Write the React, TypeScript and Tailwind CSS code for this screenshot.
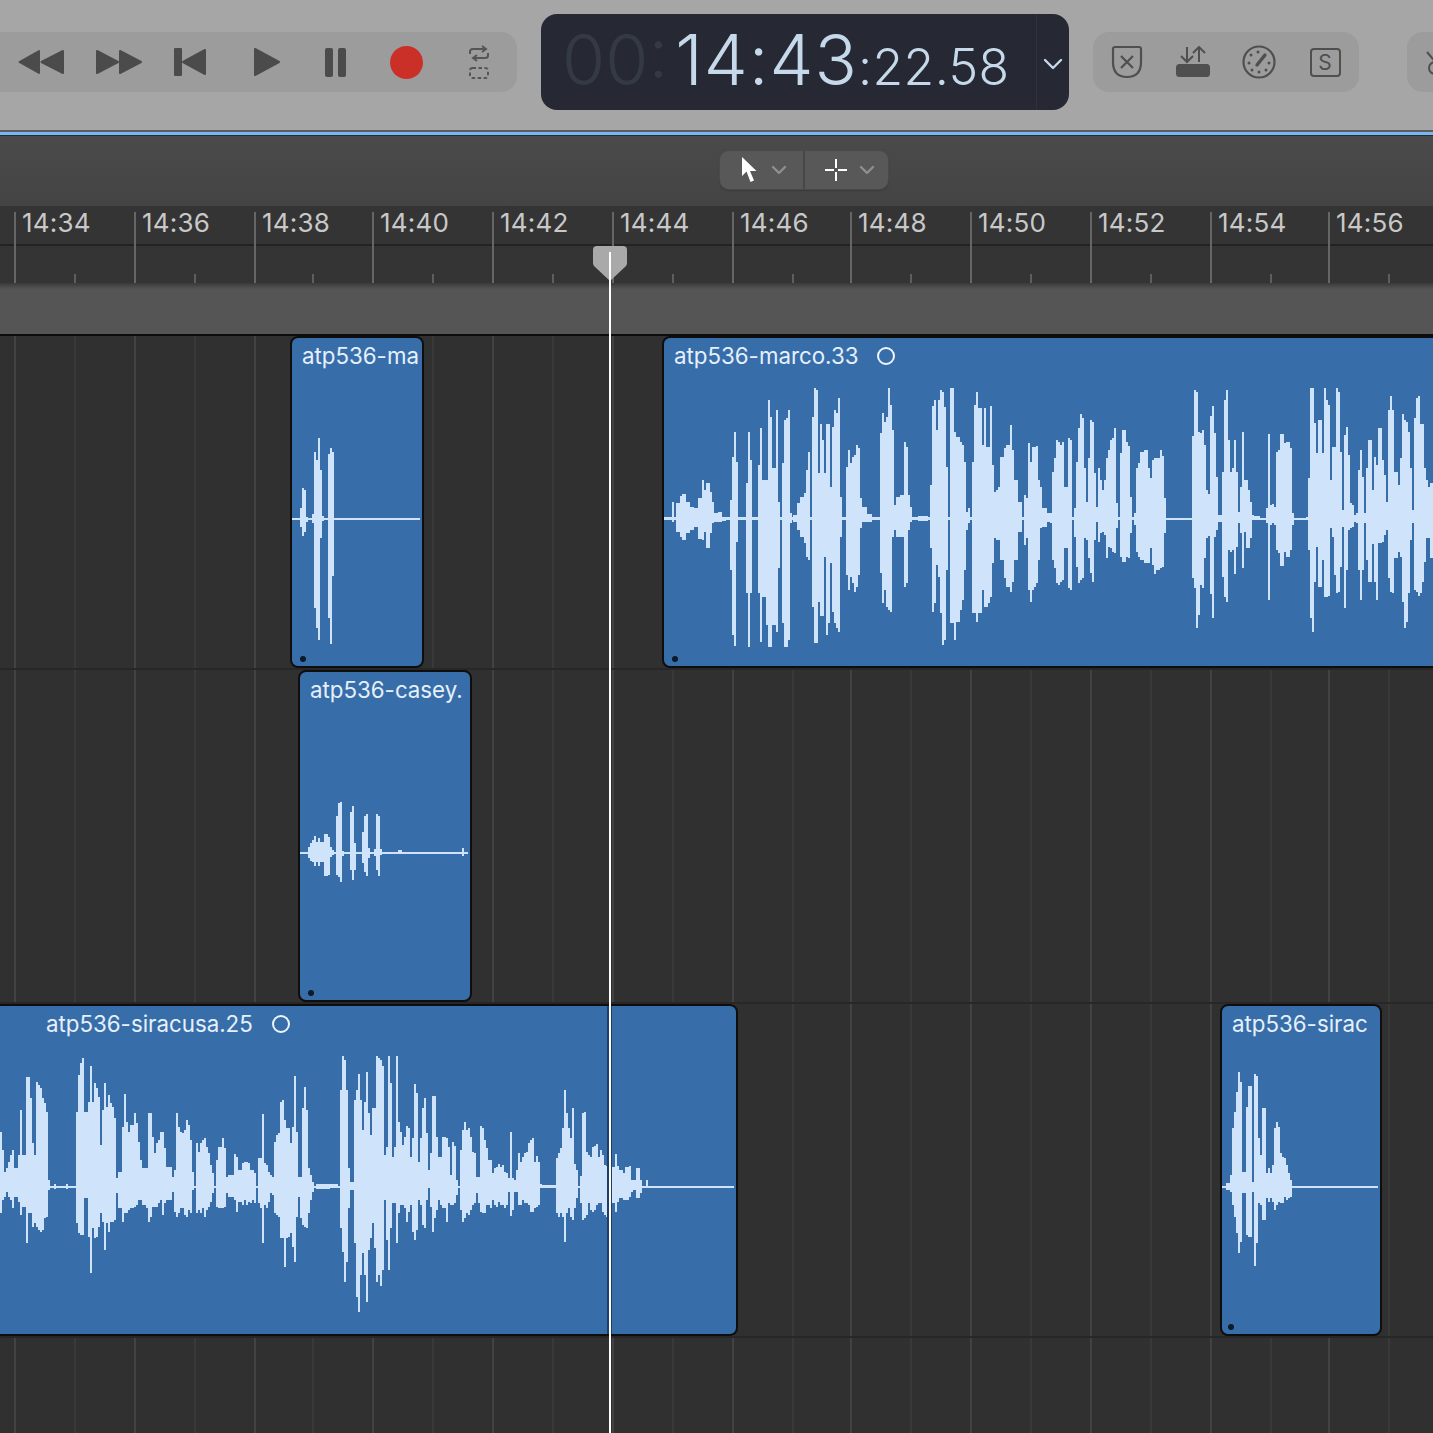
type Bar = [number, number, number, number];

const ui = { fontFamily: "Inter, 'Liberation Sans', sans-serif" };

// bars are [x0, x1, top, bottom] read off a 3x crop, so ox/oy is that crop's origin
const toPath = (bars: Bar[], ox: number, oy: number) =>
  bars
    .map(
      ([a, b, t, u]) =>
        `M${ox + a / 3} ${oy + t / 3}H${ox + b / 3}V${oy + u / 3}H${ox + a / 3}Z`
    )
    .join("");

const marcoA: Bar[] = [
  [12,1170,562,569],[36,42,516,576],[48,60,520,605],[60,66,498,620],[66,78,492,630],[78,90,515,610],[90,102,532,600],[102,114,534,590],[114,126,505,628],[126,132,450,630],[132,138,480,605],[138,150,458,654],[150,156,485,610],[156,162,515,580],[162,174,550,575],[174,186,546,575],[186,198,560,572],
  [210,216,510,720],[216,222,380,915],[222,228,306,948],[228,234,395,635],[258,264,460,790],[264,270,306,952],[270,276,390,790],
  [294,300,405,790],[300,306,294,935],[306,318,450,800],[318,324,450,885],[324,330,210,952],[330,336,262,952],[336,348,415,885],[348,354,240,905],[354,360,515,715],[366,372,400,880],[372,378,270,952],[378,384,265,952],[384,390,240,930],[390,396,550,580],
  [400,412,555,575],[412,420,520,600],[420,432,500,620],[432,438,490,640],[438,444,420,680],[444,450,365,690],[456,462,260,830],[462,468,175,940],[468,474,180,940],[474,480,430,815],[480,486,282,858],[486,492,330,858],[492,498,430,680],[498,504,282,915],[504,510,282,880],[510,516,470,700],[516,522,290,845],[522,528,240,880],[528,534,250,895],[534,540,205,905],[540,546,500,620],
  [558,564,410,735],[564,570,360,780],[570,576,400,740],[576,582,380,760],[582,588,375,785],[588,594,345,770],[594,600,355,735],[600,606,505,595],[606,620,530,575],[620,636,552,575],
  [660,666,310,730],[666,672,250,820],[672,678,275,780],[678,684,262,830],[684,690,175,840],[690,696,225,845],[696,702,300,620],[702,708,525,600],[708,720,500,620],[720,732,495,620],[732,738,335,770],[738,744,350,760],[744,750,495,600],[750,756,530,575],[774,804,558,572],
  [810,816,465,655],[816,822,228,845],[822,828,210,820],[828,834,300,705],[834,840,210,740],[840,846,180,850],[846,852,185,945],[852,858,230,930],[858,864,410,720],[870,876,175,880],[876,882,175,880],[882,888,305,930],[888,900,320,875],[900,906,335,840],[906,912,345,810],[912,918,395,720],[918,924,545,600],[924,930,535,580],
  [936,942,395,850],[942,948,225,850],[948,954,185,875],[954,966,235,850],[966,972,345,780],[972,978,235,830],[978,984,350,830],[984,990,350,820],[990,996,228,800],[996,1002,405,700],[1002,1008,485,625],[1008,1014,480,630],[1014,1020,470,630],[1020,1032,380,690],[1032,1038,355,745],[1038,1050,345,770],[1050,1056,285,785],[1056,1062,360,755],[1062,1074,450,690],[1074,1086,515,605],[1092,1098,495,645],[1098,1104,505,625],[1104,1110,338,780],[1110,1116,395,815],[1116,1122,350,780],[1122,1128,350,770],[1128,1134,348,760],[1134,1140,450,690],[1140,1146,470,595],[1146,1160,535,590],[1160,1170,550,575],
];

const marcoB: Bar[] = [
  [0,1149,443,449],[0,6,430,460],[6,12,305,570],[12,18,265,595],[18,24,210,640],[24,30,215,645],[30,36,225,635],[36,42,215,630],[42,54,350,535],[54,60,205,655],[60,66,210,660],[66,72,440,450],[72,78,415,500],[78,84,275,590],[84,90,175,640],[90,96,132,630],[96,102,145,625],[102,108,295,505],[108,114,395,510],[114,120,265,565],[120,126,150,610],[126,132,155,635],[132,138,310,510],[138,144,410,455],[144,150,295,515],[150,156,330,490],[156,162,360,485],[162,168,330,495],[168,174,265,565],[174,180,240,530],[180,186,210,535],[186,192,205,545],[192,198,175,550],[198,204,400,475],[204,210,440,450],[210,216,250,560],[216,228,180,575],[228,234,215,560],[234,240,228,565],[240,246,380,490],[246,252,440,450],[252,258,430,465],[258,264,295,545],[264,270,280,560],[270,282,245,570],[282,294,240,578],[294,300,295,580],[300,306,325,535],[306,312,270,585],[312,318,265,612],[318,330,265,600],[330,336,240,595],[336,342,258,590],[342,348,385,490],
  [426,432,198,625],[432,438,60,655],[438,444,65,775],[444,450,185,735],[450,456,190,645],[456,462,180,655],[462,468,225,565],[468,474,360,505],[474,480,372,498],[480,486,138,672],[486,492,108,745],[492,498,190,500],[498,504,320,480],[504,516,435,455],[516,522,305,620],[522,528,90,680],[528,534,60,695],[534,540,210,540],[540,546,305,545],[546,552,295,540],[552,558,210,612],[558,564,305,530],[564,570,425,460],[570,576,350,490],[576,582,185,595],[582,588,330,485],[588,594,330,535],[594,600,360,535],[600,606,395,505],[606,612,435,450],[612,630,438,447],
  [648,654,415,460],[654,660,192,690],[660,666,405,465],[666,672,402,460],[672,678,410,465],[678,684,245,540],[684,690,240,548],[690,702,192,588],[702,708,218,545],[708,720,215,562],[720,726,235,540],[726,732,430,465],
  [768,774,440,450],[774,780,325,540],[780,786,55,745],[786,792,55,785],[792,798,160,635],[798,804,250,530],[804,816,150,650],[816,822,250,570],[822,828,55,680],[828,834,90,680],[834,840,105,678],[840,846,330,475],[846,852,230,500],[852,858,230,615],[858,864,55,670],[864,870,65,665],[870,876,245,590],[876,882,420,470],[882,888,195,715],[888,894,170,600],[894,900,255,480],[900,906,400,475],[906,912,405,470],[912,918,435,455],[918,924,430,460],[924,930,300,600],[930,936,240,690],[936,942,320,600],[942,948,430,460],[948,954,295,570],[954,966,210,635],[966,972,360,522],[972,978,260,635],[978,984,285,690],[984,996,175,520],[996,1002,270,515],[1002,1008,315,495],[1008,1014,395,480],[1014,1020,120,625],[1020,1026,78,665],[1026,1032,120,670],[1032,1044,305,565],[1044,1050,345,545],[1050,1056,265,560],[1056,1062,132,695],[1062,1068,150,775],[1068,1074,155,755],[1074,1080,185,670],[1080,1086,295,510],[1086,1092,420,460],[1092,1098,145,660],[1098,1104,85,665],[1104,1110,78,678],[1110,1116,162,670],[1116,1122,162,635],[1122,1128,295,575],[1128,1134,330,505],[1134,1140,350,505],[1140,1149,340,565],
];

const siracusaA: Bar[] = [
  [0,990,557,564],[0,6,395,640],[6,12,450,600],[12,18,515,590],[18,24,505,575],[24,30,485,590],[30,36,465,600],[36,42,450,625],[42,54,505,590],[54,60,465,605],[60,66,330,645],[66,78,465,620],[78,84,230,730],[84,90,230,640],[90,96,295,640],[96,102,430,680],[102,108,465,670],[108,114,245,680],[114,120,255,690],[120,126,265,695],[126,132,295,690],[132,138,310,655],[138,144,335,650],[144,150,540,570],[162,168,552,566],[198,204,552,566],
  [228,234,335,670],[234,240,225,700],[240,246,190,705],[246,252,175,705],[252,264,335,595],[264,270,305,710],[270,276,198,820],[276,282,305,685],[282,288,250,715],[288,294,265,710],[294,300,290,680],[300,306,435,640],[306,312,330,665],[312,318,248,750],[318,324,320,670],[324,330,285,695],[330,336,310,665],[336,342,320,665],[342,348,355,660],[348,354,535,580],[354,366,515,625],[366,372,380,665],[372,378,282,640],[378,384,365,640],[384,390,395,630],[390,402,375,625],[402,408,338,620],[408,414,368,615],[414,420,425,600],[420,426,480,600],[426,438,505,615],[438,444,505,625],[444,450,338,665],[450,456,340,650],[456,462,410,620],[462,468,460,620],[468,474,430,620],[474,480,420,610],[480,486,395,600],[486,492,395,645],[492,498,445,610],[498,516,500,600],[516,522,530,575],[522,528,510,635],[528,534,338,650],[534,540,380,640],[540,546,395,625],[546,552,400,625],[552,558,390,645],[558,564,360,650],[564,570,375,630],[570,576,420,640],[576,582,515,570],[588,594,430,640],[594,600,455,630],[600,606,430,640],[606,612,420,625],[612,618,415,650],[618,624,440,630],[624,630,460,620],[630,636,495,605],[636,642,520,580],[648,654,480,620],[654,666,440,625],[666,672,415,625],[672,678,445,620],[678,684,530,580],[684,702,525,590],[702,708,462,600],[708,714,470,635],[714,726,510,605],[726,732,490,615],[732,738,485,600],[738,744,485,615],[744,750,490,605],[750,756,510,610],[756,762,510,600],[762,768,520,610],[774,780,475,610],[780,786,475,625],[786,792,342,730],[792,798,490,615],[798,804,495,625],[804,810,515,605],[810,816,525,580],[816,822,530,585],[822,828,425,640],[828,834,405,645],[834,840,400,650],[840,846,305,715],[846,852,300,715],[852,858,360,800],[858,864,385,715],[864,870,385,710],[870,876,430,700],[876,882,380,740],[882,888,228,785],[888,894,395,650],[894,900,530,590],[900,906,530,655],[906,912,325,675],[912,918,260,680],[918,924,330,685],[924,930,505,640],[930,936,525,600],[936,942,545,575],[948,990,552,566],
];

const siracusaB: Bar[] = [
  [0,24,432,443],[24,1212,437,443],[30,36,150,565],[36,42,48,635],[42,48,60,725],[48,54,150,665],[54,60,385,505],[60,72,425,450],[72,78,180,610],[78,84,150,772],[84,90,102,815],[90,96,180,705],[96,102,270,640],[102,108,185,705],[108,114,97,785],[114,120,220,630],[120,126,285,595],[126,132,205,550],[132,138,205,625],[138,144,48,725],[144,150,55,705],[150,156,60,737],[156,162,78,690],[162,168,345,480],[168,174,320,600],[174,180,48,690],[180,186,130,565],[186,192,350,490],[192,198,320,490],[198,204,48,610],[204,210,245,520],[210,216,275,495],[216,222,315,495],[222,228,290,505],[228,234,258,545],[234,240,265,515],[240,246,350,495],[246,252,295,575],[252,258,132,600],[258,264,160,570],[264,270,365,480],[270,276,295,495],[276,282,205,555],[282,288,175,565],[288,294,280,480],[294,300,390,445],[300,306,340,500],[306,312,168,575],[312,318,168,535],[318,324,290,510],[324,330,350,480],[330,336,350,495],[336,348,290,505],[348,354,295,545],[354,360,320,490],[360,366,405,495],[366,372,306,495],[372,378,318,490],[378,384,420,465],[390,396,330,510],[396,402,270,545],[402,408,245,535],[408,414,270,520],[414,420,265,525],[420,426,290,510],[426,432,335,495],[432,438,340,490],[438,444,410,460],[444,450,410,490],[450,456,258,515],[456,462,265,520],[462,468,300,520],[468,474,325,495],[474,480,360,495],[480,486,360,505],[486,492,400,480],[492,498,385,495],[498,504,380,500],[504,510,372,485],[510,516,380,495],[516,522,375,495],[522,528,395,505],[528,534,400,495],[534,540,415,455],[540,546,276,528],[546,552,415,510],[552,558,420,455],[558,564,390,455],[564,570,340,495],[570,576,365,495],[576,582,350,480],[582,588,340,490],[588,594,335,490],[594,600,310,495],[600,606,300,515],[606,612,295,515],[612,618,365,505],[618,624,348,500],[624,630,365,495],[630,636,432,445],[636,678,436,444],
  [678,684,355,520],[684,690,340,532],[690,696,325,520],[696,702,265,530],[702,708,150,605],[708,714,220,520],[714,720,265,505],[720,726,295,530],[726,732,205,540],[732,738,372,505],[738,744,390,475],[750,756,408,490],[756,762,220,540],[762,768,215,535],[768,774,335,525],[774,780,345,490],[780,786,350,510],[786,792,320,515],[792,798,318,510],[798,804,312,495],[804,810,350,490],[810,816,330,490],[816,822,345,515],[822,828,375,525],[828,834,378,530],[834,854,380,490],[854,860,342,515],[860,866,378,485],[866,878,390,475],[878,884,398,480],[884,896,380,480],[896,902,378,470],[902,908,420,455],[908,918,420,450],[918,930,384,473],[930,936,420,460],[948,954,420,438],
];

const sirac: Bar[] = [
  [66,534,557,564],[78,90,550,570],[90,96,525,575],[96,102,385,615],[102,108,335,650],[108,114,275,700],[114,120,215,760],[120,126,245,725],[126,138,515,580],[138,144,320,705],[144,156,258,710],[156,162,545,575],[162,168,222,798],[168,174,228,730],[174,180,415,610],[180,186,465,615],[186,198,325,660],[198,204,520,595],[204,210,505,605],[210,216,518,595],[216,222,495,605],[222,228,385,630],[228,234,365,615],[234,240,380,605],[240,246,460,610],[246,252,470,610],[252,258,475,590],[258,264,495,600],[264,270,520,595],[270,276,540,590],
];

const ma: Bar[] = [
  [36,420,563,569],[60,66,535,590],[66,72,475,618],[72,78,480,605],[78,84,560,575],[96,102,552,580],[102,108,365,835],[108,114,390,895],[114,120,324,930],[120,126,420,625],[126,132,558,572],[144,150,372,865],[150,156,354,942],[156,162,366,738],
];

const casey: Bar[] = [
  [30,534,561,567],[54,60,545,580],[60,66,535,588],[66,72,525,590],[72,78,512,602],[78,84,530,590],[84,90,520,602],[90,102,530,590],[102,114,507,632],[114,120,515,630],[120,126,545,575],[126,132,555,570],[138,144,452,630],[144,150,415,635],[150,156,410,650],[156,162,558,572],[180,186,440,615],[186,192,422,645],[192,198,535,615],[216,222,500,595],[222,228,452,620],[228,234,448,632],[234,240,548,578],[252,258,552,572],[258,264,447,615],[264,270,452,632],[270,276,552,570],[324,336,556,567],[516,522,548,572],
];

const majors = [
  { x: 15, label: "14:34" },
  { x: 135, label: "14:36" },
  { x: 255, label: "14:38" },
  { x: 373, label: "14:40" },
  { x: 493, label: "14:42" },
  { x: 613, label: "14:44" },
  { x: 733, label: "14:46" },
  { x: 851, label: "14:48" },
  { x: 971, label: "14:50" },
  { x: 1091, label: "14:52" },
  { x: 1211, label: "14:54" },
  { x: 1329, label: "14:56" },
];
const minors = [75, 195, 313, 433, 553, 673, 793, 911, 1031, 1151, 1271, 1389];

function Clip({
  box,
  viewBox,
  w,
  h,
  title,
  titlePad = "pl-[10px]",
  dotLeft = "left-[8px]",
  circle,
  dot = true,
  d,
  children,
}: {
  box: string;
  viewBox: string;
  w: number;
  h: number;
  title: string;
  titlePad?: string;
  dotLeft?: string;
  circle?: boolean;
  dot?: boolean;
  d: string;
  children?: React.ReactNode;
}) {
  return (
    <div
      className={`absolute top-0 h-[332px] border-2 border-[#0e0e0e] rounded-[8px] bg-[#376eaa] overflow-hidden ${box}`}
    >
      <svg
        className="absolute left-0 top-0"
        width={w}
        height={h}
        viewBox={viewBox}
        shapeRendering="crispEdges"
      >
        <path d={d} fill="#cfe4fb" />
      </svg>
      <div
        className={`relative flex items-center h-[36px] text-[22.3px] leading-none text-[#e6f0fb] whitespace-nowrap ${titlePad}`}
        style={ui}
      >
        <span>{title}</span>
        {circle && (
          <span className="ml-[19px] w-[18px] h-[18px] rounded-full border-2 border-[#eef5fc]" />
        )}
      </div>
      {dot && (
        <span className={`absolute bottom-[4px] w-[6px] h-[6px] rounded-full bg-[#0c1a2a] ${dotLeft}`} />
      )}
      {children}
    </div>
  );
}

const Dark = "#4b4b4b";

function Toolbar() {
  return (
    <div className="h-[130px] shrink-0 flex items-start pt-[14px] bg-[#a6a6a6]">
      <div className="mt-[18px] w-[517px] h-[60px] shrink-0 flex items-center rounded-r-[16px] bg-[#9c9c9c]">
        <div className="w-[82px] flex justify-center">
          <svg width="46" height="26" viewBox="0 0 46 26" fill={Dark} stroke={Dark} strokeWidth="2" strokeLinejoin="round">
            <path d="M1.5 13 21 2v22zM23.5 13 45 2v22z" />
          </svg>
        </div>
        <div className="w-[74px] flex justify-center">
          <svg width="46" height="26" viewBox="0 0 46 26" fill={Dark} stroke={Dark} strokeWidth="2" strokeLinejoin="round">
            <path d="M1 2l21 11L1 24zM24 2l21 11-21 11z" />
          </svg>
        </div>
        <div className="w-[68px] flex justify-center">
          <svg width="34" height="30" viewBox="0 0 34 30" fill={Dark} stroke={Dark} strokeWidth="2" strokeLinejoin="round">
            <path d="M2 2h6v26H2zM10 15 32 3v24z" />
          </svg>
        </div>
        <div className="w-[86px] flex justify-center">
          <svg width="28" height="30" viewBox="0 0 28 30" fill={Dark} stroke={Dark} strokeWidth="2" strokeLinejoin="round">
            <path d="M2 2l24 13L2 28z" />
          </svg>
        </div>
        <div className="w-[50px] flex justify-center gap-[5px]">
          <span className="w-[8px] h-[29px] rounded-[2px] bg-[#4b4b4b]" />
          <span className="w-[8px] h-[29px] rounded-[2px] bg-[#4b4b4b]" />
        </div>
        <div className="w-[92px] flex justify-center">
          <span className="w-[33px] h-[33px] rounded-full bg-[#cb3028]" />
        </div>
        <div className="w-[54px] flex justify-center">
          <svg width="22" height="34" viewBox="0 0 22 34" fill="none" stroke="#555" strokeWidth="2">
            <path d="M2 9V6.5Q2 4 5 4h12M14 1l4 3-4 3" />
            <path d="M20 8v2.5Q20 13 17 13H6M9 10l-4 3 4 3" />
            <rect x="2" y="23" width="18" height="10" rx="2.5" strokeDasharray="3.5 2.5" />
          </svg>
        </div>
      </div>

      <div className="ml-[24px] w-[528px] h-[96px] shrink-0 relative flex items-baseline rounded-[16px] bg-[#262833] pl-[21px] pt-[6px] text-[#c6d9ea] font-light" style={ui}>
        <span className="text-[70px] leading-[80px] text-[#343a45]">00:</span>
        <span className="ml-[7px] text-[70px] leading-[80px] tracking-[1px]">14:43</span>
        <span className="text-[50px] leading-[80px] tracking-[0.4px]">:22.58</span>
        <span className="absolute left-[495px] top-0 h-full w-px bg-[#2f313c]" />
        <svg className="absolute left-[502px] top-[43px]" width="20" height="14" viewBox="0 0 20 14" fill="none" stroke="#c6d9ea" strokeWidth="2.4" strokeLinecap="round" strokeLinejoin="round">
          <path d="M2 3l8 8 8-8" />
        </svg>
      </div>

      <div className="ml-[24px] mt-[18px] w-[266px] h-[60px] shrink-0 flex items-center pl-px rounded-[16px] bg-[#9c9c9c]">
        <div className="w-[66px] flex justify-center">
          <svg width="32" height="34" viewBox="0 0 32 34" fill="none" stroke="#4f4f4f" strokeWidth="2.2">
            <path d="M4 2h24q2 0 2 2v13q0 15-14 15T2 17V4q0-2 2-2z" />
            <path d="M10 11l12 12M22 11 10 23" />
          </svg>
        </div>
        <div className="w-[66px] flex justify-center">
          <svg width="34" height="32" viewBox="0 0 34 32" fill="none" stroke="#4f4f4f" strokeWidth="2">
            <path d="M11 1v15M5 10l6 6 6-6M23 16V1M17 7l6-6 6 6" />
            <rect x="1" y="19" width="32" height="11" rx="2.5" fill="#4f4f4f" />
          </svg>
        </div>
        <div className="w-[66px] flex justify-center">
          <svg width="34" height="34" viewBox="0 0 34 34" fill="none" stroke="#4f4f4f" strokeWidth="2.2">
            <circle cx="17" cy="17" r="15.5" />
            <path d="M15 20l8-10" strokeWidth="3.4" strokeLinecap="round" />
            <g fill="#4f4f4f" stroke="none">
              <circle cx="16" cy="7" r="1.5" />
              <circle cx="9" cy="10" r="1.5" />
              <circle cx="7" cy="18" r="1.5" />
              <circle cx="10" cy="25" r="1.5" />
              <circle cx="17" cy="27" r="1.5" />
              <circle cx="24" cy="25" r="1.5" />
              <circle cx="27" cy="18" r="1.5" />
            </g>
          </svg>
        </div>
        <div className="w-[66px] flex justify-center">
          <span className="w-[31px] h-[29px] flex items-center justify-center rounded-[4px] border-[2.5px] border-[#4f4f4f] text-[21px] leading-none text-[#4f4f4f]" style={ui}>
            S
          </span>
        </div>
      </div>

      <div className="ml-[48px] mt-[18px] w-[100px] h-[60px] shrink-0 rounded-[16px] bg-[#9c9c9c] pl-[19px] pt-[19px]">
        <svg width="14" height="26" viewBox="0 0 14 26" fill="none" stroke="#4f4f4f" strokeWidth="2">
          <path d="M1 1l11 13" />
          <circle cx="9" cy="17" r="6" />
        </svg>
      </div>
    </div>
  );
}

function ControlBar() {
  return (
    <div className="h-[70px] shrink-0 flex justify-center bg-linear-to-b from-[#4a4a4a] to-[#444444] pt-[14px]">
      <div className="ml-[175px] w-[170px] h-[40px] flex rounded-[10px] bg-[#585858] border border-[#4a4a4a] shadow-[0_1px_1px_#3a3a3a]">
        <div className="w-[85px] flex items-center border-r-2 border-[#474747] pl-[21px] gap-[14px]">
          <svg width="16" height="28" viewBox="0 0 16 28" fill="#fff">
            <path d="M1 1v19l4.5-4.5L9.500 26l3.500-1.500-4-9.500h6.500z" />
          </svg>
          <svg width="16" height="10" viewBox="0 0 16 10" fill="none" stroke="#8f8f8f" strokeWidth="2.400" strokeLinecap="round" strokeLinejoin="round">
            <path d="M2 2l6 6 6-6" />
          </svg>
        </div>
        <div className="flex-1 flex items-center pl-[20px] gap-[12px]">
          <svg width="22" height="22" viewBox="0 0 22 22" fill="none" stroke="#fff" strokeWidth="2">
            <path d="M0 11h9M13 11h9M11 0v9M11 13v9" />
          </svg>
          <svg width="16" height="10" viewBox="0 0 16 10" fill="none" stroke="#8f8f8f" strokeWidth="2.400" strokeLinecap="round" strokeLinejoin="round">
            <path d="M2 2l6 6 6-6" />
          </svg>
        </div>
      </div>
    </div>
  );
}

function Ruler() {
  return (
    <div className="h-[77px] shrink-0 relative bg-[#343434] overflow-hidden">
      <div className="h-[38px] border-b-2 border-[#232323] box-content" />
      {majors.map((m) => (
        <div key={m.x} className="absolute top-[6px] bottom-0 w-[2px] bg-[#666666]" style={{ left: m.x - 1 }}>
          <span className="absolute left-[8px] top-[-4px] text-[26px] leading-[30px] tracking-[0.2px] text-[#c8c8c8] whitespace-nowrap" style={ui}>
            {m.label}
          </span>
        </div>
      ))}
      {minors.map((x) => (
        <div key={x} className="absolute top-[68px] bottom-0 w-[2px] bg-[#5e5e5e]" style={{ left: x - 1 }} />
      ))}
    </div>
  );
}

export default function App() {
  return (
    <div className="relative w-[1433px] h-[1433px] overflow-hidden flex flex-col bg-[#303030]">
      <Toolbar />
      <div className="h-[6px] shrink-0 bg-[#78b6f6] border-t-2 border-b border-t-[#5c5c5c] border-b-[#2c2c2c]" />
      <ControlBar />
      <Ruler />
      <div className="h-[51px] shrink-0 bg-linear-to-b from-[#3a3a3a] to-[#555555] to-[12%]" />
      <div className="h-[2px] shrink-0 bg-[#0c0c0c]" />

      <div className="relative flex-1 overflow-hidden">
        {majors.map((m) => (
          <div key={m.x} className="absolute inset-y-0 w-[2px] bg-[#424242]" style={{ left: m.x - 1 }} />
        ))}
        {minors.map((x) => (
          <div key={x} className="absolute inset-y-0 w-[2px] bg-[#393939]" style={{ left: x - 1 }} />
        ))}

        <div className="relative h-[334px] border-b-2 border-[#272727]">
          <Clip box="left-[290px] w-[134px]" viewBox="292 338 130 328" w={130} h={328} title="atp536-ma" d={toPath(ma, 280, 330)} />
          <Clip
            box="left-[662px] w-[800px]"
            viewBox="664 338 796 328"
            w={796}
            h={328}
            title="atp536-marco.33"
            circle
            d={toPath(marcoA, 660, 330) + toPath(marcoB, 1050, 370)}
          />
        </div>
        <div className="relative h-[334px] border-b-2 border-[#272727]">
          <Clip box="left-[298px] w-[174px]" viewBox="300 672 170 328" w={170} h={328} title="atp536-casey." d={toPath(casey, 290, 665)} />
        </div>
        <div className="relative h-[334px] border-b-2 border-[#272727]">
          <Clip
            box="left-[-10px] w-[748px]"
            viewBox="-8 1006 744 328"
            w={744}
            h={328}
            title="atp536-siracusa.25"
            titlePad="pl-[54px]"
            circle
            dot={false}
            d={toPath(siracusaA, 0, 1000) + toPath(siracusaB, 330, 1040)}
          >
            <span className="absolute inset-y-0 left-[615px] w-[2px] bg-[#1f3f66]" />
            <span className="absolute inset-y-0 left-[619px] w-[1px] bg-[#1f3f66]" />
          </Clip>
          <Clip box="left-[1220px] w-[162px]" viewBox="1222 1006 158 328" w={158} h={328} title="atp536-sirac" dotLeft="left-[6px]" d={toPath(sirac, 1200, 1000)} />
        </div>
      </div>

      {/* playhead */}
      <svg className="absolute left-[592px] top-[245px]" width="36" height="37" viewBox="0 0 36 37" fill="#a9a9a9">
        <path d="M5 1h26q4 0 4 4v13q0 2-1.500 3.500L18 36 2.500 21.500Q1 20 1 18V5q0-4 4-4z" />
      </svg>
      <div className="absolute left-[609px] top-[252px] bottom-0 w-[2px] bg-white" />
    </div>
  );
}
